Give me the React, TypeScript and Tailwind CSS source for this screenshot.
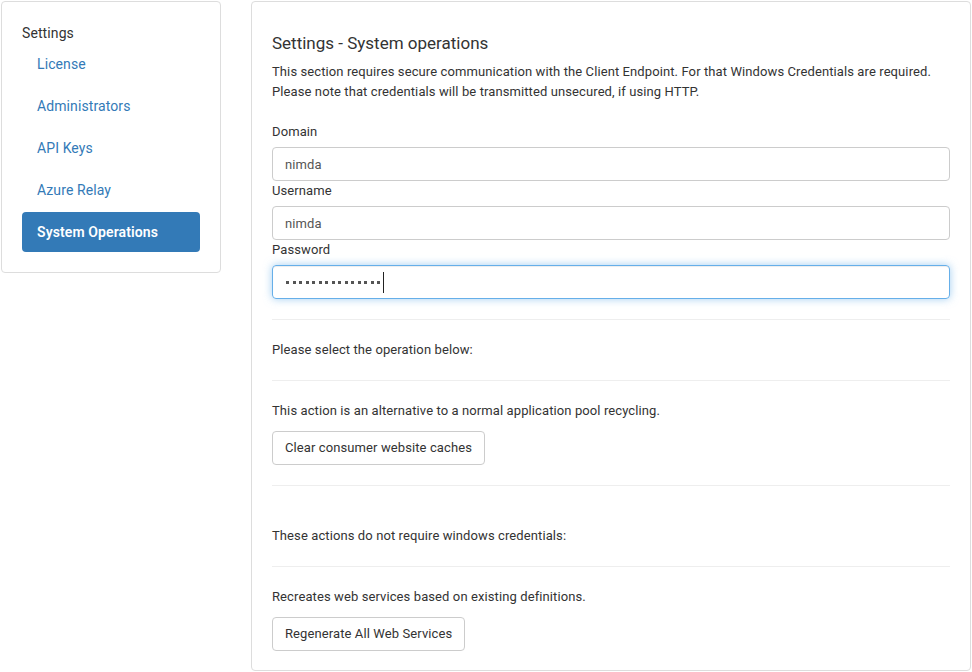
import { useState } from "react";

const navItems = ["License", "Administrators", "API Keys", "Azure Relay", "System Operations"];

export default function App() {
  const [active, setActive] = useState("System Operations");
  const [domain, setDomain] = useState("nimda");
  const [username, setUsername] = useState("nimda");

  return (
    <div className="flex items-start gap-[30px] p-px text-[13px] leading-5 tracking-[0.1px] text-[#333] font-['Roboto','Liberation_Sans',sans-serif] bg-white min-h-[672px]">
      <div className="w-[220px] shrink-0 rounded border border-[#ddd] px-[20px] pt-[20px] pb-[20px]">
        <div className="text-[14px] leading-[22px]">Settings</div>
        <ul className="flex flex-col gap-[2px]">
          {navItems.map((item) => (
            <li key={item}>
              <a
                href="#"
                onClick={(e) => { e.preventDefault(); setActive(item); }}
                className={
                  active === item
                    ? "block h-[40px] rounded bg-[#337ab7] px-[15px] py-[10px] text-[14px] font-semibold text-white"
                    : "block h-[40px] px-[15px] py-[10px] text-[14px] text-[#337ab7]"
                }
              >
                {item}
              </a>
            </li>
          ))}
        </ul>
      </div>

      <div className="flex-1 rounded border border-[#ddd] px-[20px] pt-[30px] pb-[19px]">
        <h3 className="text-[17px] leading-[22px] mb-[8px] tracking-normal">Settings - System operations</h3>
        <p className="mb-[20px]">
          This section requires secure communication with the Client Endpoint. For that Windows Credentials are required.
          <br />
          Please note that credentials will be transmitted unsecured, if using HTTP.
        </p>

        <label className="block mb-[5px]">Domain</label>
        <input
          value={domain}
          onChange={(e) => setDomain(e.target.value)}
          className="block w-full h-[34px] rounded border border-[#ccc] px-3 text-[#555] outline-none"
        />
        <label className="block mb-[5px]">Username</label>
        <input
          value={username}
          onChange={(e) => setUsername(e.target.value)}
          className="block w-full h-[34px] rounded border border-[#ccc] px-3 text-[#555] outline-none"
        />
        <label className="block mb-[5px]">Password</label>
        <div className="flex items-center h-[34px] w-full rounded border border-[#66afe9] pl-[13px] text-[#555] shadow-[inset_0_1px_1px_rgba(0,0,0,0.075),0_0_8px_rgba(102,175,233,0.6)]">
          <div className="flex gap-[3.5px]">
            {Array.from({ length: 15 }).map((_, i) => (
              <span key={i} className="block w-[3px] h-[3px] bg-[#555]" />
            ))}
          </div>
          <span className="ml-[3px] h-[21px] w-px bg-[#222]" />
        </div>

        <hr className="mt-[20px] mb-[20px] border-[#eee]" />
        <p className="mb-[20px]">Please select the operation below:</p>
        <hr className="mb-[20px] border-[#eee]" />

        <p className="mb-[10px]">This action is an alternative to a normal application pool recycling.</p>
        <button className="h-[34px] rounded border border-[#ccc] bg-white px-3 text-[#333]">Clear consumer website caches</button>

        <hr className="mt-[20px] mb-[40px] border-[#eee]" />
        <p className="mb-[20px]">These actions do not require windows credentials:</p>
        <hr className="mb-[20px] border-[#eee]" />

        <p className="mb-[10px]">Recreates web services based on existing definitions.</p>
        <button className="h-[34px] rounded border border-[#ccc] bg-white px-3 text-[#333]">Regenerate All Web Services</button>
      </div>
    </div>
  );
}
